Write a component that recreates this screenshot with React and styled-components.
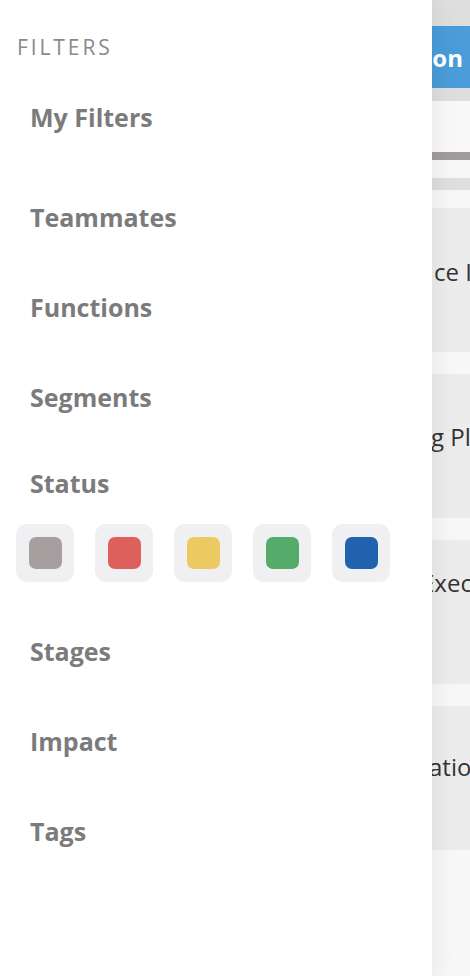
import React from "react";
import styled, { createGlobalStyle } from "styled-components";

const GlobalStyle = createGlobalStyle`
  * { box-sizing: border-box; }
  html, body {
    margin: 0;
    padding: 0;
    background: #f7f7f7;
    font-family: "Open Sans", "Liberation Sans", sans-serif;
  }
`;

const filterGroups = ["Teammates", "Functions", "Segments"];
const lowerGroups = ["Stages", "Impact", "Tags"];
const statusColors = ["#a5a09f", "#de605c", "#edc962", "#55ab69", "#2062ad"];

const cards = [
  { title: "ce Impact", start: 434, top: 47 },
  { title: "g Plan", start: 431, top: 46 },
  { title: "Executive Summary", start: 421, top: 26 },
  { title: "ation Review", start: 429, top: 44 },
];

const App = () => {
  return (
    <>
      <GlobalStyle />
      <Page>
        <TopStrip />
        <ActionRow>
          <ActionButton>New Action</ActionButton>
        </ActionRow>
        <Divider />
        <SearchBar />
        <Progress />
        <Spacer $h={18} />
        <SubStrip />
        <Spacer $h={18} />
        <CardList>
          {cards.map((c) => (
            <Card key={c.title} $top={c.top}>
              <CardTitle $start={c.start}>{c.title}</CardTitle>
            </Card>
          ))}
        </CardList>
      </Page>

      <Drawer>
        <Heading>FILTERS</Heading>
        <Group>My Filters</Group>
        <Spacer $h={10} />
        {filterGroups.map((g) => (
          <Group key={g}>{g}</Group>
        ))}
        <Group $h={82}>Status</Group>
        <Swatches>
          {statusColors.map((c) => (
            <Swatch key={c}>
              <Dot $color={c} />
            </Swatch>
          ))}
        </Swatches>
        <Spacer $h={24} />
        {lowerGroups.map((g) => (
          <Group key={g}>{g}</Group>
        ))}
      </Drawer>
    </>
  );
};

export default App;

const Page = styled.div`
  width: 100%;
  min-height: 976px;
  display: flex;
  flex-direction: column;
  background: #f7f7f7;
  overflow: hidden;
`;
const TopStrip = styled.div`
  height: 26px;
  background: #dedede;
`;
const ActionRow = styled.div`
  display: flex;
  justify-content: flex-end;
  background: #dedede;
`;
const ActionButton = styled.div`
  height: 62px;
  width: 260px;
  display: flex;
  align-items: center;
  justify-content: flex-end;
  padding-right: 7px;
  background: linear-gradient(90deg, #4595d4, #4a9dd9);
  color: #ffffff;
  font-weight: 700;
  font-size: 24px;
  white-space: nowrap;
`;
const Divider = styled.div`
  height: 13px;
  background: #dedede;
`;
const SearchBar = styled.div`
  height: 51px;
  background: #f8f8f8;
`;
const Progress = styled.div`
  height: 8px;
  background: #a09c9b;
`;
const Spacer = styled.div`
  height: ${(p) => p.$h}px;
  flex-shrink: 0;
`;
const SubStrip = styled.div`
  height: 12px;
  background: #dedede;
`;
const CardList = styled.div`
  display: flex;
  flex-direction: column;
  gap: 22px;
`;
const Card = styled.div`
  height: 144px;
  background: #ececec;
  padding-top: ${(p) => p.$top}px;
  overflow: hidden;
`;
const CardTitle = styled.div`
  padding-left: ${(p) => p.$start}px;
  font-size: 24px;
  line-height: 34px;
  color: #333333;
  white-space: nowrap;
  overflow: hidden;
`;

const Drawer = styled.aside`
  position: absolute;
  top: 0;
  left: 0;
  width: 432px;
  height: 976px;
  background: #ffffff;
  box-shadow: 2px 0 24px rgba(0, 0, 0, 0.07);
  display: flex;
  flex-direction: column;
`;
const Heading = styled.div`
  height: 72px;
  padding: 33px 0 0 17px;
  font-size: 21px;
  line-height: 28px;
  letter-spacing: 2.9px;
  color: #8a8a8a;
  font-weight: 400;
`;
const Group = styled.div`
  height: ${(p) => p.$h || 90}px;
  flex-shrink: 0;
  display: flex;
  align-items: center;
  padding-left: 30px;
  font-size: 25px;
  font-weight: 700;
  color: #7b7b7b;
`;
const Swatches = styled.div`
  display: flex;
  gap: 21px;
  padding-left: 16px;
`;
const Swatch = styled.div`
  width: 58px;
  height: 58px;
  border-radius: 11px;
  background: #f0f0f2;
  display: flex;
  align-items: center;
  justify-content: center;
`;
const Dot = styled.div`
  width: 33px;
  height: 32px;
  border-radius: 7px;
  background: ${(p) => p.$color};
`;
